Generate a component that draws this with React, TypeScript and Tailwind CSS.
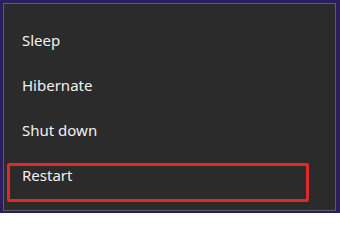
const items = ["Sleep", "Hibernate", "Shut down", "Restart"];

export default function App() {
  return (
    <div className="w-[340px] h-[213px] bg-[#2b1d5e] pt-[3px] pl-[3px] pr-[4px] pb-[2px]">
      <div className="relative h-full border border-[#5d5b6e] bg-[#2b2b2b] pt-[14px] pl-[18px] font-['Noto_Sans',sans-serif] text-[15px] text-[#f2f2f2]">
        {items.map((label) => (
          <div key={label} className="h-[45px] flex items-center">
            {label}
          </div>
        ))}
        {/* annotation box */}
        <div className="absolute left-[3px] top-[159px] w-[302px] h-[39px] border-[3px] border-[#e02a2a] rounded-[2px]" />
      </div>
    </div>
  );
}
